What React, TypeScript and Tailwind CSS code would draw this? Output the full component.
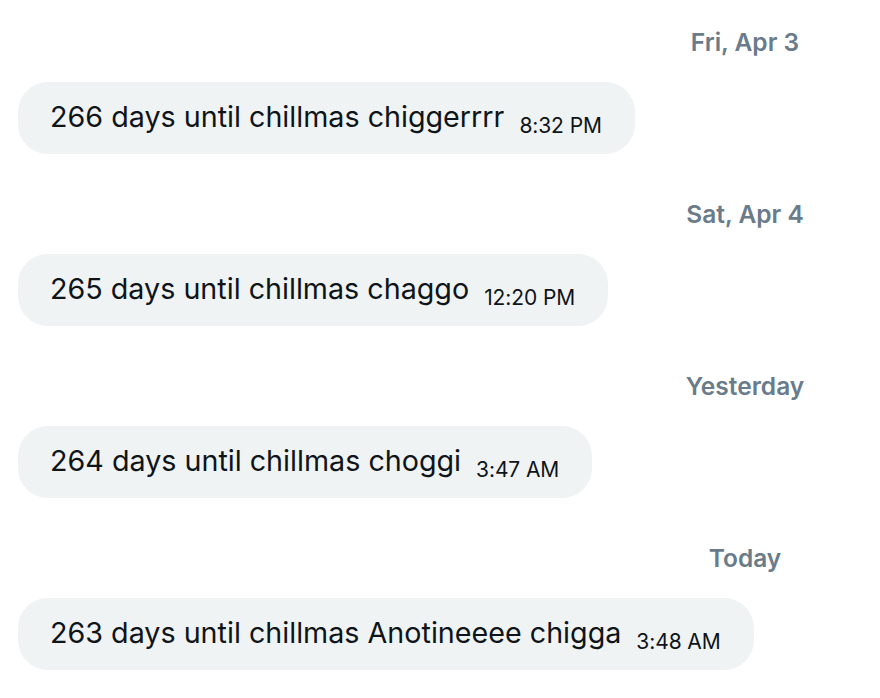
import React from "react";

const groups = [
  { date: "Fri, Apr 3", text: "266 days until chillmas chiggerrrr", time: "8:32 PM" },
  { date: "Sat, Apr 4", text: "265 days until chillmas chaggo", time: "12:20 PM" },
  { date: "Yesterday", text: "264 days until chillmas choggi", time: "3:47 AM" },
  { date: "Today", text: "263 days until chillmas Anotineeee chigga", time: "3:48 AM" },
];

export default function App() {
  return (
    <div
      className="w-[880px] h-[698px] bg-white overflow-hidden pt-[26px] flex flex-col gap-[44px]"
      style={{ fontFamily: "Inter, 'Noto Sans', sans-serif" }}
    >
      {groups.map((g) => (
        <div key={g.date} className="flex flex-col">
          <div className="flex">
            <div className="ml-auto w-[270px] h-8 flex items-center justify-center text-[24.5px] font-semibold text-[#6a7b89]">
              {g.date}
            </div>
          </div>
          <div className="mt-6 ml-[18px] self-start h-[72px] rounded-[30px] bg-[#eff3f4] pl-8 pr-[33px] flex items-center text-[#0f1419]">
            <span className="text-[28.7px] -translate-y-[1px]">{g.text}</span>
            <span className="ml-[15px] text-[21px] -tracking-[0.1px] translate-y-[8px]">{g.time}</span>
          </div>
        </div>
      ))}
    </div>
  );
}
